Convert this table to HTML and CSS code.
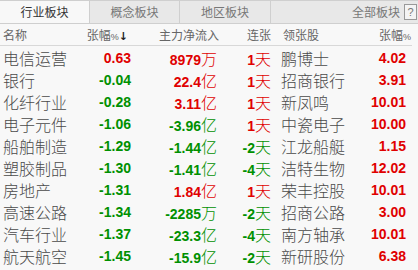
FILE: index.html
```html
<!DOCTYPE html>
<html lang="zh">
<head>
<meta charset="utf-8">
<link rel="stylesheet" href="styles.css">
</head>
<body>
<div class="tabs">
  <div class="tab active">行业板块</div>
  <div class="tab">概念板块</div>
  <div class="tab">地区板块</div>
  <div class="tab-rest"><span class="all">全部板块</span><span class="help">?</span></div>
</div>
<div class="grid head">
  <div class="c-name">名称</div>
  <div class="c-chg">张幅<span class="pct">%</span><span class="arrow">↓</span></div>
  <div class="c-flow">主力净流入</div>
  <div class="c-days">连张</div>
  <div class="c-lead">领张股</div>
  <div class="c-lchg">张幅<span class="pct">%</span></div>
</div>
<div class="rows">
  <div class="grid row"><div class="c-name">电信运营</div><div class="c-chg num up">0.63</div><div class="c-flow up"><b class="num">8979</b>万</div><div class="c-days up"><b class="num">1</b>天</div><div class="c-lead">鹏博士</div><div class="c-lchg num up">4.02</div></div>
  <div class="grid row"><div class="c-name">银行</div><div class="c-chg num down">-0.04</div><div class="c-flow up"><b class="num">22.4</b>亿</div><div class="c-days up"><b class="num">1</b>天</div><div class="c-lead">招商银行</div><div class="c-lchg num up">3.91</div></div>
  <div class="grid row"><div class="c-name">化纤行业</div><div class="c-chg num down">-0.28</div><div class="c-flow up"><b class="num">3.11</b>亿</div><div class="c-days up"><b class="num">1</b>天</div><div class="c-lead">新凤鸣</div><div class="c-lchg num up">10.01</div></div>
  <div class="grid row"><div class="c-name">电子元件</div><div class="c-chg num down">-1.06</div><div class="c-flow down"><b class="num">-3.96</b>亿</div><div class="c-days up"><b class="num">1</b>天</div><div class="c-lead">中瓷电子</div><div class="c-lchg num up">10.00</div></div>
  <div class="grid row"><div class="c-name">船舶制造</div><div class="c-chg num down">-1.29</div><div class="c-flow down"><b class="num">-1.44</b>亿</div><div class="c-days down"><b class="num">-2</b>天</div><div class="c-lead">江龙船艇</div><div class="c-lchg num up">1.15</div></div>
  <div class="grid row"><div class="c-name">塑胶制品</div><div class="c-chg num down">-1.30</div><div class="c-flow down"><b class="num">-1.41</b>亿</div><div class="c-days down"><b class="num">-4</b>天</div><div class="c-lead">洁特生物</div><div class="c-lchg num up">12.02</div></div>
  <div class="grid row"><div class="c-name">房地产</div><div class="c-chg num down">-1.31</div><div class="c-flow up"><b class="num">1.84</b>亿</div><div class="c-days up"><b class="num">1</b>天</div><div class="c-lead">荣丰控股</div><div class="c-lchg num up">10.01</div></div>
  <div class="grid row"><div class="c-name">高速公路</div><div class="c-chg num down">-1.34</div><div class="c-flow down"><b class="num">-2285</b>万</div><div class="c-days down"><b class="num">-2</b>天</div><div class="c-lead">招商公路</div><div class="c-lchg num up">3.00</div></div>
  <div class="grid row"><div class="c-name">汽车行业</div><div class="c-chg num down">-1.37</div><div class="c-flow down"><b class="num">-23.3</b>亿</div><div class="c-days down"><b class="num">-4</b>天</div><div class="c-lead">南方轴承</div><div class="c-lchg num up">10.01</div></div>
  <div class="grid row"><div class="c-name">航天航空</div><div class="c-chg num down">-1.45</div><div class="c-flow down"><b class="num">-15.9</b>亿</div><div class="c-days down"><b class="num">-2</b>天</div><div class="c-lead">新研股份</div><div class="c-lchg num up">6.38</div></div>
</div>
</body>
</html>
```
FILE: styles.css
```css
html, body {
  margin: 0;
  padding: 0;
  background: #f8f8f8;
  width: 418px;
  height: 270px;
  overflow: hidden;
  font-family: "Noto Sans CJK SC", "Liberation Sans", sans-serif;
}

.tabs {
  display: flex;
  height: 22px;
  border-top: 1px solid #cfcfcf;
  border-bottom: 1px solid #cfcfcf;
  background: #e8e8e8;
  font-size: 12px;
  line-height: 22px;
  color: #777;
}

.tab {
  width: 89px;
  border-right: 1px solid #cfcfcf;
  text-align: center;
}

.tab:nth-child(3) {
  width: 90px;
}

.tab.active {
  background: #f8f8f8;
  color: #333;
}

.tab-rest {
  flex: 1;
  display: flex;
  justify-content: flex-end;
  align-items: center;
  gap: 4px;
  padding-right: 1px;
}

.help {
  width: 11px;
  height: 14px;
  border: 1px solid #999;
  background: #f4f4f4;
  font-family: "Liberation Sans", sans-serif;
  font-size: 11px;
  line-height: 14px;
  text-align: center;
  color: #777;
}

.grid {
  display: grid;
  grid-template-columns: 80px 51px 86px 54px 79px 56px 1fr;
  align-items: center;
  white-space: nowrap;
}

.head {
  height: 21px;
  border-bottom: 1px solid #d8d8d8;
  font-size: 12px;
  color: #666;
  margin-right: 6px;
}

.head .c-chg { text-align: right; padding-right: 3px; }
.head .c-flow { text-align: right; margin-right: -2px; }
.head .c-lchg { text-align: right; margin-right: -5px; }
.head .c-lead { padding-left: 12px; }

.pct {
  font-family: "Liberation Sans", sans-serif;
  font-size: 9px;
}

.arrow {
  font-family: "DejaVu Sans", sans-serif;
  font-size: 11px;
  color: #222;
  font-weight: bold;
}

.row {
  height: 22px;
  font-size: 16px;
  color: #4a4a4a;
  font-weight: 300;
}

.c-name { padding-left: 3px; }
.c-chg, .c-flow, .c-days, .c-lchg { text-align: right; }
.c-lead { padding-left: 10px; }

.num {
  font-family: "Liberation Sans", sans-serif;
  font-weight: bold;
  font-size: 14px;
}

.up { color: #e00000; }
.down { color: #009000; }
```
